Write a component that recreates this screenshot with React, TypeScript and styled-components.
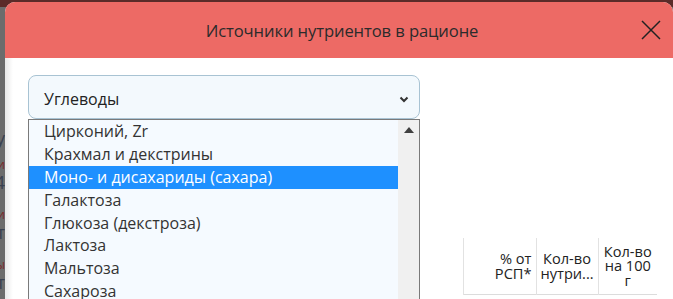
import styled, { createGlobalStyle } from 'styled-components';

const GlobalStyle = createGlobalStyle`
  html, body {
    margin: 0;
    padding: 0;
    overflow: hidden;
  }
  body {
    font-family: 'Open Sans', 'Liberation Sans', sans-serif;
  }
`;

const Backdrop = styled.div`
  width: 673px;
  height: 299px;
  display: flex;
  box-sizing: border-box;
  padding-top: 2px;
  background: linear-gradient(#5b2b29 0 7px, #6c6c6c 7px);
  overflow: hidden;
`;

// page content behind the overlay, only a sliver of it shows
const Peek = styled.div`
  width: 5px;
  flex: none;
  overflow: hidden;
  display: flex;
  flex-direction: column;
  align-items: flex-end;
  padding-top: 126px;
`;

const PeekLine = styled.span<{ $red?: boolean; $gap?: number }>`
  display: block;
  white-space: nowrap;
  margin-top: ${p => p.$gap || 0}px;
  height: ${p => (p.$red ? '14px' : '20px')};
  font-size: ${p => (p.$red ? '12px' : '18px')};
  line-height: ${p => (p.$red ? '14px' : '20px')};
  color: ${p => (p.$red ? '#7a2a2a' : '#3a4150')};
`;

const Modal = styled.div`
  flex: 1;
  display: flex;
  flex-direction: column;
  border-radius: 10px 10px 0 0;
  overflow: hidden;
  background: #fff;
`;

const Header = styled.div`
  height: 56px;
  flex: none;
  background: #ed6a65;
  display: flex;
  align-items: center;
  justify-content: center;
  position: relative;
`;

const Title = styled.h4`
  margin: 0 0 0 6px;
  font-size: 16.6px;
  font-weight: 400;
  color: #2b2b2b;
  letter-spacing: -0.1px;
`;

const CloseBtn = styled.button`
  position: absolute;
  right: 10px;
  top: 16px;
  width: 24px;
  height: 24px;
  padding: 0;
  border: 0;
  background: transparent;
  display: flex;
  align-items: center;
  justify-content: center;
`;

const Body = styled.div`
  flex: 1;
  position: relative;
  padding: 17px 0 0 23px;
  background: linear-gradient(90deg, #e9e9e9 0, #ffffff 8px);
`;

const SelectBox = styled.div`
  width: 392px;
  height: 44px;
  box-sizing: border-box;
  border: 1px solid #a8c3d3;
  border-radius: 8px;
  background: #f3f9fd;
  display: flex;
  align-items: center;
  justify-content: space-between;
  padding: 4px 10px 0 15px;
  font-size: 16px;
  font-weight: 500;
  color: #222;
`;

const DropList = styled.div`
  position: absolute;
  left: 23px;
  top: 61px;
  width: 392px;
  height: 190px;
  box-sizing: border-box;
  border: 1px solid #7a7a7a;
  background: #f5faff;
  display: flex;
  z-index: 2;
`;

const Options = styled.div`
  flex: 1;
  display: flex;
  flex-direction: column;
`;

const Option = styled.div<{ $active?: boolean }>`
  height: 22.9px;
  flex: none;
  line-height: 22px;
  padding-left: 15px;
  font-size: 16px;
  color: ${p => (p.$active ? '#fff' : '#333')};
  background: ${p => (p.$active ? '#1e90ff' : 'transparent')};
  white-space: nowrap;
`;

const Scrollbar = styled.div`
  width: 21px;
  flex: none;
  background: #f0f0f0;
  display: flex;
  justify-content: center;
  padding-top: 7px;
  box-sizing: border-box;
`;

const TableWrap = styled.div`
  margin-top: 119px;
  margin-right: 16px;
  display: flex;
  justify-content: flex-end;
`;

const HeadTable = styled.table`
  border-collapse: collapse;
  table-layout: fixed;
  width: 194px;
  font-size: 14.6px;
  line-height: 14.6px;
  color: #222;
  border-bottom: 1px solid #dcdcdc;
`;

const Th = styled.th<{ $w: number; $align?: string }>`
  width: ${p => p.$w}px;
  height: 56px;
  box-sizing: border-box;
  font-weight: 400;
  padding: 0 4px;
  text-align: ${p => p.$align || 'center'};
  border-left: 1px solid #e2e2e2;
  vertical-align: middle;
  white-space: nowrap;
`;

const options = [
  'Цирконий, Zr',
  'Крахмал и декстрины',
  'Моно- и дисахариды (сахара)',
  'Галактоза',
  'Глюкоза (декстроза)',
  'Лактоза',
  'Мальтоза',
  'Сахароза',
];

export default function App() {
  return (
    <>
      <GlobalStyle />
      <Backdrop>
        <Peek>
          <PeekLine>у</PeekLine>
          <PeekLine $red $gap={10}>и</PeekLine>
          <PeekLine>4</PeekLine>
          <PeekLine $red $gap={16}>и</PeekLine>
          <PeekLine>т</PeekLine>
          <PeekLine $red $gap={16}>ы</PeekLine>
          <PeekLine>т</PeekLine>
        </Peek>
        <Modal>
          <Header>
            <Title>Источники нутриентов в рационе</Title>
            <CloseBtn aria-label="close">
              <svg width="20" height="20" viewBox="0 0 20 20">
                <path d="M1 1 L19 19 M19 1 L1 19" stroke="#222" strokeWidth="1.5" />
              </svg>
            </CloseBtn>
          </Header>
          <Body>
            <SelectBox>
              <span>Углеводы</span>
              <svg width="10" height="7" viewBox="0 0 10 7">
                <path d="M1.5 1.5 L5 5 L8.5 1.5" stroke="#333" strokeWidth="2" fill="none" />
              </svg>
            </SelectBox>
            <DropList>
              <Options>
                {options.map((o, i) => (
                  <Option key={o} $active={i === 2}>{o}</Option>
                ))}
              </Options>
              <Scrollbar>
                <svg width="10" height="6" viewBox="0 0 10 6">
                  <path d="M0 6 L5 0 L10 6 Z" fill="#404040" />
                </svg>
              </Scrollbar>
            </DropList>
            <TableWrap>
              <HeadTable>
                <thead>
                  <tr>
                    <Th $w={73} $align="right">% от<br />РСП*</Th>
                    <Th $w={62}>Кол-во<br />нутри...</Th>
                    <Th $w={59}>Кол-во<br />на 100<br />г</Th>
                  </tr>
                </thead>
              </HeadTable>
            </TableWrap>
          </Body>
        </Modal>
      </Backdrop>
    </>
  );
}
